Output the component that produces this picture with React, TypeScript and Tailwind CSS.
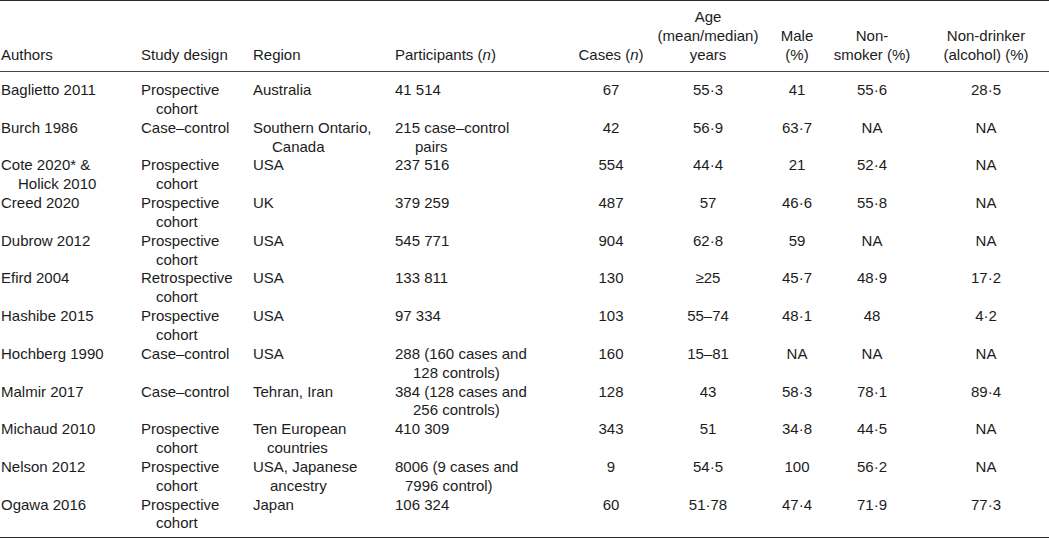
import React from "react";

type Row = {
  author: string[];
  design: string[];
  region: string[];
  regionIndent?: string;
  participants: string[];
  partIndent?: string;
  cases: string;
  age: string;
  male: string;
  smoker: string;
  drinker: string;
};

const rows: Row[] = [
  { author: ["Baglietto 2011"], design: ["Prospective", "cohort"], region: ["Australia"], participants: ["41 514"], cases: "67", age: "55·3", male: "41", smoker: "55·6", drinker: "28·5" },
  { author: ["Burch 1986"], design: ["Case–control"], region: ["Southern Ontario,", "Canada"], regionIndent: "pl-[19px]", participants: ["215 case–control", "pairs"], partIndent: "pl-[20px]", cases: "42", age: "56·9", male: "63·7", smoker: "NA", drinker: "NA" },
  { author: ["Cote 2020* &", "Holick 2010"], design: ["Prospective", "cohort"], region: ["USA"], participants: ["237 516"], cases: "554", age: "44·4", male: "21", smoker: "52·4", drinker: "NA" },
  { author: ["Creed 2020"], design: ["Prospective", "cohort"], region: ["UK"], participants: ["379 259"], cases: "487", age: "57", male: "46·6", smoker: "55·8", drinker: "NA" },
  { author: ["Dubrow 2012"], design: ["Prospective", "cohort"], region: ["USA"], participants: ["545 771"], cases: "904", age: "62·8", male: "59", smoker: "NA", drinker: "NA" },
  { author: ["Efird 2004"], design: ["Retrospective", "cohort"], region: ["USA"], participants: ["133 811"], cases: "130", age: "≥25", male: "45·7", smoker: "48·9", drinker: "17·2" },
  { author: ["Hashibe 2015"], design: ["Prospective", "cohort"], region: ["USA"], participants: ["97 334"], cases: "103", age: "55–74", male: "48·1", smoker: "48", drinker: "4·2" },
  { author: ["Hochberg 1990"], design: ["Case–control"], region: ["USA"], participants: ["288 (160 cases and", "128 controls)"], partIndent: "pl-[18px]", cases: "160", age: "15–81", male: "NA", smoker: "NA", drinker: "NA" },
  { author: ["Malmir 2017"], design: ["Case–control"], region: ["Tehran, Iran"], participants: ["384 (128 cases and", "256 controls)"], partIndent: "pl-[18px]", cases: "128", age: "43", male: "58·3", smoker: "78·1", drinker: "89·4" },
  { author: ["Michaud 2010"], design: ["Prospective", "cohort"], region: ["Ten European", "countries"], regionIndent: "pl-[14px]", participants: ["410 309"], cases: "343", age: "51", male: "34·8", smoker: "44·5", drinker: "NA" },
  { author: ["Nelson 2012"], design: ["Prospective", "cohort"], region: ["USA, Japanese", "ancestry"], regionIndent: "pl-[17px]", participants: ["8006 (9 cases and", "7996 control)"], partIndent: "pl-[10px]", cases: "9", age: "54·5", male: "100", smoker: "56·2", drinker: "NA" },
  { author: ["Ogawa 2016"], design: ["Prospective", "cohort"], region: ["Japan"], participants: ["106 324"], cases: "60", age: "51·78", male: "47·4", smoker: "71·9", drinker: "77·3" },
];

const grid =
  "grid grid-cols-[141px_112px_142px_165px_102px_92px_86px_64px_145px]";

function Lines({ lines, indent, className = "" }: { lines: string[]; indent: string; className?: string }) {
  return (
    <div className={className}>
      {lines.map((l, i) => (
        <div key={i} className={`whitespace-nowrap ${i > 0 ? indent : ""}`}>
          {l}
        </div>
      ))}
    </div>
  );
}

function Num({ v, className = "" }: { v: string; className?: string }) {
  return (
    <div className={`flex flex-col items-center ${className}`}>
      <span className="whitespace-nowrap">{v}</span>
    </div>
  );
}

function Head({ lines, className = "" }: { lines: React.ReactNode[]; className?: string }) {
  return (
    <div className={`flex flex-col items-center ${className}`}>
      {lines.map((l, i) => (
        <span key={i} className="whitespace-nowrap">
          {l}
        </span>
      ))}
    </div>
  );
}

export default function App() {
  return (
    <div className="w-[1049px] h-[539px] bg-white text-[#1c1c1c] text-[15px] leading-[18.85px] font-['Liberation_Sans',Arial,sans-serif]">
      <div className="border-t-[1.5px] border-[#2a2a2a]" />
      <div className={`${grid} items-end pt-[7px] pb-[6px] border-b border-[#444]`}>
        <div className="pl-px">Authors</div>
        <div>Study design</div>
        <div>Region</div>
        <div>
          Participants (<i>n</i>)
        </div>
        <Head lines={[<>Cases (<i>n</i>)</>]} />
        <Head lines={["Age", "(mean/median)", "years"]} />
        <Head lines={["Male", "(%)"]} />
        <Head lines={["Non-", "smoker (%)"]} />
        <Head lines={["Non-drinker", "(alcohol) (%)"]} className="pl-[19px]" />
      </div>
      <div className="pt-[9.5px] pb-[4px] border-b border-[#2a2a2a]">
        {rows.map((r, i) => (
          <div key={i} className={`${grid} items-start h-[37.7px]`}>
            <Lines lines={r.author} indent="pl-[17px]" className="pl-px" />
            <Lines lines={r.design} indent="pl-[15px]" />
            <Lines lines={r.region} indent={r.regionIndent ?? ""} />
            <Lines lines={r.participants} indent={r.partIndent ?? ""} />
            <Num v={r.cases} />
            <Num v={r.age} />
            <Num v={r.male} />
            <Num v={r.smoker} />
            <Num v={r.drinker} className="pl-[19px]" />
          </div>
        ))}
      </div>
    </div>
  );
}
